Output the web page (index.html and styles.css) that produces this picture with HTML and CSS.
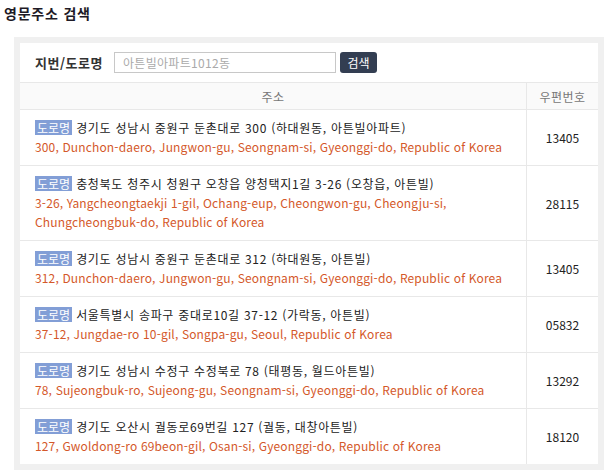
FILE: index.html
```html
<!DOCTYPE html>
<html lang="ko">
<head>
    <meta charset="UTF-8">
    <title>영문주소 검색</title>
    <link rel="stylesheet" href="styles.css">
</head>
<body>
    <h1 class="page-title">영문주소 검색</h1>
    <div class="search-wrap">
        <div class="search-panel">
            <div class="search-bar">
                <label for="keyword">지번/도로명</label>
                <input type="text" id="keyword" placeholder="아튼빌아파트1012동">
                <button>검색</button>
            </div>
            <table class="result-table">
                <thead>
                    <tr>
                        <th class="col-addr">주소</th>
                        <th class="col-zip">우편번호</th>
                    </tr>
                </thead>
                <tbody>
                    <tr>
                        <td class="addr">
                            <div class="kor"><span class="badge">도로명</span>경기도 성남시 중원구 둔촌대로 300 (하대원동, 아튼빌아파트)</div>
                            <div class="eng">300, Dunchon-daero, Jungwon-gu, Seongnam-si, Gyeonggi-do, Republic of Korea</div>
                        </td>
                        <td class="zip">13405</td>
                    </tr>
                    <tr>
                        <td class="addr">
                            <div class="kor"><span class="badge">도로명</span>충청북도 청주시 청원구 오창읍 양청택지1길 3-26 (오창읍, 아튼빌)</div>
                            <div class="eng">3-26, Yangcheongtaekji 1-gil, Ochang-eup, Cheongwon-gu, Cheongju-si,<br>Chungcheongbuk-do, Republic of Korea</div>
                        </td>
                        <td class="zip">28115</td>
                    </tr>
                    <tr>
                        <td class="addr">
                            <div class="kor"><span class="badge">도로명</span>경기도 성남시 중원구 둔촌대로 312 (하대원동, 아튼빌)</div>
                            <div class="eng">312, Dunchon-daero, Jungwon-gu, Seongnam-si, Gyeonggi-do, Republic of Korea</div>
                        </td>
                        <td class="zip">13405</td>
                    </tr>
                    <tr>
                        <td class="addr">
                            <div class="kor"><span class="badge">도로명</span>서울특별시 송파구 중대로10길 37-12 (가락동, 아튼빌)</div>
                            <div class="eng">37-12, Jungdae-ro 10-gil, Songpa-gu, Seoul, Republic of Korea</div>
                        </td>
                        <td class="zip">05832</td>
                    </tr>
                    <tr>
                        <td class="addr">
                            <div class="kor"><span class="badge">도로명</span>경기도 성남시 수정구 수정북로 78 (태평동, 월드아튼빌)</div>
                            <div class="eng">78, Sujeongbuk-ro, Sujeong-gu, Seongnam-si, Gyeonggi-do, Republic of Korea</div>
                        </td>
                        <td class="zip">13292</td>
                    </tr>
                    <tr>
                        <td class="addr">
                            <div class="kor"><span class="badge">도로명</span>경기도 오산시 궐동로69번길 127 (궐동, 대창아튼빌)</div>
                            <div class="eng">127, Gwoldong-ro 69beon-gil, Osan-si, Gyeonggi-do, Republic of Korea</div>
                        </td>
                        <td class="zip">18120</td>
                    </tr>
                </tbody>
            </table>
        </div>
    </div>
</body>
</html>
```

FILE: styles.css
```css
body {
    margin: 0;
    padding: 4px 7px 0 4px;
    font-family: "Noto Sans CJK KR", "Noto Sans", sans-serif;
    font-size: 12px;
    color: #222;
    background: #fff;
}

.page-title {
    margin: 0;
    font-size: 14px;
    line-height: 18px;
    font-weight: bold;
    letter-spacing: 0.8px;
    color: #1e1a26;
}

.search-wrap {
    margin: 15px 0 0 10px;
    padding: 6px;
    background: #f0f0f0;
}

.search-panel {
    background: #fff;
}

.search-bar {
    display: flex;
    align-items: center;
    height: 39px;
    padding: 0 15px;
    box-sizing: border-box;
}

.search-bar label {
    width: 69px;
    font-size: 13px;
    font-weight: bold;
    letter-spacing: 0.5px;
    color: #333;
    margin-right: 10px;
    white-space: nowrap;
}

.search-bar input {
    width: 222px;
    height: 21px;
    box-sizing: border-box;
    border: 1px solid #c8c8c8;
    padding: 0 8px;
    font-family: inherit;
    font-size: 12px;
    letter-spacing: 0.3px;
    outline: none;
}

.search-bar input::placeholder {
    color: #aaa;
}

.search-bar button {
    margin-left: 4px;
    height: 21px;
    width: 37px;
    padding: 0;
    border: none;
    border-radius: 3px;
    background: #333e52;
    color: #fff;
    font-family: inherit;
    font-size: 12px;
    cursor: pointer;
}

.result-table {
    width: 100%;
    border-collapse: collapse;
}

.result-table th {
    height: 26px;
    padding: 0;
    background: #fafafa;
    border-top: 1px solid #e8e8e8;
    border-bottom: 1px solid #e8e8e8;
    font-weight: normal;
    color: #777;
    letter-spacing: 0.4px;
    text-align: center;
}

.result-table .col-zip {
    width: 71px;
    border-left: 1px solid #e8e8e8;
}

.result-table td {
    border-bottom: 1px solid #e8e8e8;
}

.result-table tbody tr:last-child td {
    border-bottom: none;
}

.addr {
    padding: 8px 15px 9px;
    line-height: 19px;
}

.kor {
    height: 19px;
    letter-spacing: 0.7px;
}

.zip {
    border-left: 1px solid #e8e8e8;
    text-align: center;
    color: #222;
}

.badge {
    display: inline-block;
    vertical-align: top;
    margin-top: 2px;
    background: #829ed6;
    color: #fff;
    line-height: 15px;
    letter-spacing: 0;
    padding: 0 2px;
    margin-right: 4px;
}

.eng {
    color: #d4582a;
    letter-spacing: 0.15px;
}
```
